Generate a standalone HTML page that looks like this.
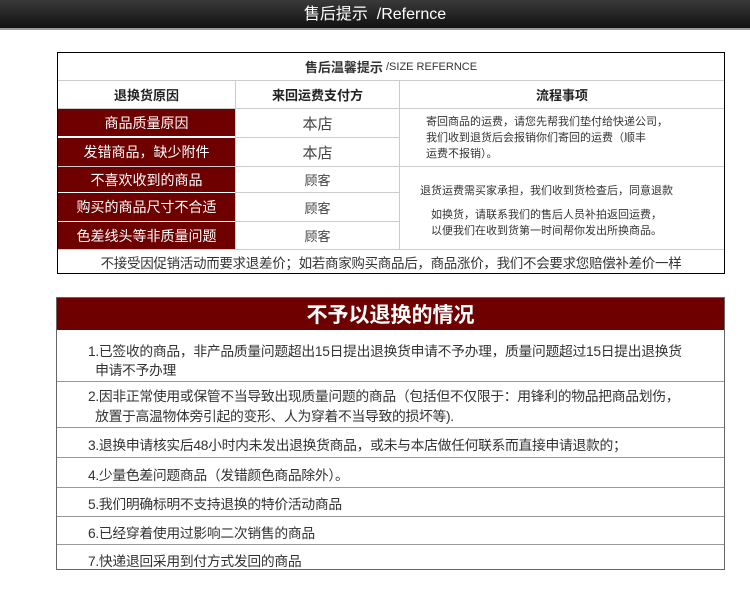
<!DOCTYPE html><html><head><meta charset="utf-8"><style>
*{margin:0;padding:0;box-sizing:border-box}
body{width:750px;height:594px;background:#fff;position:relative;font-family:"Liberation Sans","Noto Sans CJK SC",sans-serif;color:#222;overflow:hidden}
.top{position:absolute;left:0;top:0;width:750px;height:30px;background:linear-gradient(#3a3a3a,#111);border-bottom:2px solid #999;color:#fff;text-align:center;font-size:16px;line-height:30px}
.a{position:absolute;white-space:nowrap}
.b{border:1px solid #000}
.c{position:absolute;display:flex;align-items:center;justify-content:center;text-align:center;white-space:nowrap}
.red{background:#6e0000;color:#fff;font-size:14px}
.l{background:#ccc;position:absolute}
.t{font-size:13.8px;color:#333;letter-spacing:-0.3px}
</style></head><body>
<div class="top">售后提示 &nbsp;/Refernce</div>
<div class="a b" style="left:57px;top:52px;width:668px;height:222px"></div>
<div class="c" style="left:58px;top:53px;width:666px;height:27px;font-size:13px;color:#333"><b>售后温馨提示</b><span style="font-size:11px">&nbsp;/SIZE REFERNCE</span></div>
<div class="l" style="left:58px;top:80px;width:666px;height:1px"></div>
<div class="c" style="left:58px;top:81px;width:177px;height:27px;font-size:13px;font-weight:bold">退换货原因</div>
<div class="c" style="left:236px;top:81px;width:163px;height:27px;font-size:13px;font-weight:bold">来回运费支付方</div>
<div class="c" style="left:400px;top:81px;width:324px;height:27px;font-size:13px;font-weight:bold">流程事项</div>
<div class="l" style="left:235px;top:81px;width:1px;height:168px"></div>
<div class="l" style="left:399px;top:81px;width:1px;height:168px"></div>
<div class="l" style="left:58px;top:108px;width:666px;height:1px"></div>
<div class="c red" style="left:58px;top:109px;width:177px;height:27px">商品质量原因</div>
<div class="c red" style="left:58px;top:138px;width:177px;height:28px">发错商品，缺少附件</div>
<div class="c red" style="left:58px;top:167px;width:177px;height:25px">不喜欢收到的商品</div>
<div class="c red" style="left:58px;top:193px;width:177px;height:28px">购买的商品尺寸不合适</div>
<div class="c red" style="left:58px;top:222px;width:177px;height:27px">色差线头等非质量问题</div>
<div class="l" style="left:236px;top:137px;width:163px;height:1px"></div>
<div class="l" style="left:58px;top:166px;width:666px;height:1px"></div>
<div class="l" style="left:236px;top:192px;width:163px;height:1px"></div>
<div class="l" style="left:236px;top:221px;width:163px;height:1px"></div>
<div class="l" style="left:58px;top:249px;width:666px;height:1px"></div>
<div class="c" style="left:236px;top:109px;width:163px;height:28px;font-size:15px;color:#444">本店</div>
<div class="c" style="left:236px;top:138px;width:163px;height:28px;font-size:15px;color:#444">本店</div>
<div class="c" style="left:236px;top:167px;width:163px;height:25px;font-size:13px;color:#444">顾客</div>
<div class="c" style="left:236px;top:193px;width:163px;height:28px;font-size:13px;color:#444">顾客</div>
<div class="c" style="left:236px;top:222px;width:163px;height:27px;font-size:13px;color:#444">顾客</div>
<div class="a" style="left:426px;top:114px;font-size:11px;line-height:16px;color:#333">寄回商品的运费，请您先帮我们垫付给快递公司，<br>我们收到退货后会报销你们寄回的运费（顺丰<br>运费不报销）。</div>
<div class="a" style="left:420px;top:182px;font-size:11px;color:#333">退货运费需买家承担，我们收到货检查后，同意退款</div>
<div class="a" style="left:431px;top:207px;font-size:11px;line-height:16px;color:#333">如换货，请联系我们的售后人员补拍返回运费，<br>以便我们在收到货第一时间帮你发出所换商品。</div>
<div class="c" style="left:58px;top:250px;width:666px;height:23px;font-size:13.5px;color:#333;letter-spacing:-0.3px">不接受因促销活动而要求退差价；如若商家购买商品后，商品涨价，我们不会要求您赔偿补差价一样</div>

<div class="a b" style="left:56px;top:297px;width:669px;height:273px;border-color:#666"></div>
<div class="c red" style="left:57px;top:298px;width:667px;height:32px;font-size:21px;font-weight:bold">不予以退换的情况</div>
<div class="a t" style="left:88px;top:342px;line-height:19px">1.已签收的商品，非产品质量问题超出15日提出退换货申请不予办理，质量问题超过15日提出退换货<br>&nbsp;&nbsp;申请不予办理</div>
<div class="l" style="left:57px;top:381px;width:667px;height:1px;background:#999"></div>
<div class="a t" style="left:88px;top:387px;line-height:20px">2.因非正常使用或保管不当导致出现质量问题的商品（包括但不仅限于：用锋利的物品把商品划伤，<br>&nbsp;&nbsp;放置于高温物体旁引起的变形、人为穿着不当导致的损坏等).</div>
<div class="l" style="left:57px;top:427px;width:667px;height:1px;background:#999"></div>
<div class="a t" style="left:88px;top:434px">3.退换申请核实后48小时内未发出退换货商品，或未与本店做任何联系而直接申请退款的；</div>
<div class="l" style="left:57px;top:457px;width:667px;height:1px;background:#999"></div>
<div class="a t" style="left:88px;top:464px">4.少量色差问题商品（发错颜色商品除外）。</div>
<div class="l" style="left:57px;top:487px;width:667px;height:1px;background:#999"></div>
<div class="a t" style="left:88px;top:493px">5.我们明确标明不支持退换的特价活动商品</div>
<div class="l" style="left:57px;top:516px;width:667px;height:1px;background:#999"></div>
<div class="a t" style="left:88px;top:522px">6.已经穿着使用过影响二次销售的商品</div>
<div class="l" style="left:57px;top:544px;width:667px;height:1px;background:#999"></div>
<div class="a t" style="left:88px;top:550px">7.快递退回采用到付方式发回的商品</div>
</body></html>
